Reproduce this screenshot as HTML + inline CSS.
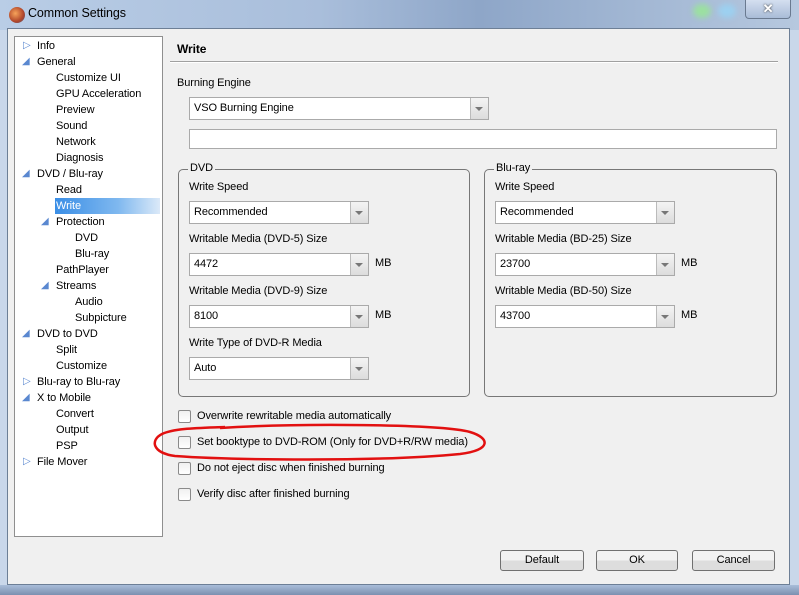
<!DOCTYPE html>
<html><head><style>
*{margin:0;padding:0;box-sizing:border-box}
body{width:799px;height:595px;overflow:hidden;background:#c9d7ea;font-family:"Liberation Sans",sans-serif;font-size:11px;letter-spacing:-0.1px;color:#000;position:relative}
.a{position:absolute}
#title{left:0;top:0;width:799px;height:30px;background:linear-gradient(90deg,#b9cde6 0%,#a9bedb 40%,#8ea6c8 60%,#b6c8df 100%)}
#client{left:7px;top:28px;width:783px;height:557px;background:#f0f0f0;border:1px solid #6d7f96}
#bottom{left:0;top:585px;width:799px;height:10px;background:linear-gradient(#a9bdd9,#7c90b0)}
#tree{left:14px;top:36px;width:149px;height:501px;background:#fff;border:1px solid #8f8f8f}
.t{position:absolute;height:16px;line-height:16px;font-size:11px;white-space:nowrap}
.tri{position:absolute;font-size:10px;color:#5a88d0}
.combo{position:absolute;height:23px;background:#fff;border:1px solid #aaa;font-size:11px;line-height:21px;padding-left:4px}
.combo::after{content:"";position:absolute;right:0;top:0;width:17px;height:21px;background:linear-gradient(#f4f4f4,#dcdcdc);border-left:1px solid #bbb}
.combo::before{content:"";position:absolute;right:5px;top:9px;border:4px solid transparent;border-top:4px solid #777;z-index:2}
.lbl{position:absolute;font-size:11px;white-space:nowrap}
.grp{position:absolute;border:1px solid #777;border-radius:5px}
.cb{position:absolute;width:13px;height:13px;border:1px solid #8a8a8a;border-radius:2px;background:linear-gradient(#f0f0f0,#fff)}
.btn{position:absolute;height:21px;border:1px solid #707070;border-radius:3px;background:linear-gradient(#f2f2f2 50%,#dddddd 50%);text-align:center;line-height:19px;font-size:11px}
</style></head><body>
<div class="a" id="title"></div>
<div class="a" style="left:9px;top:7px;width:16px;height:16px;border-radius:50%;background:radial-gradient(circle at 40% 40%,#f7a35a,#b0452a 60%,#3c5a8a)"></div>
<div class="a" style="left:28px;top:6px;font-size:12.5px">Common Settings</div>
<div class="a" style="left:693px;top:4px;width:18px;height:14px;border-radius:50%;background:#9be0a0;filter:blur(3px)"></div>
<div class="a" style="left:718px;top:4px;width:18px;height:14px;border-radius:50%;background:#9cd0f0;filter:blur(3px)"></div>
<div class="a" style="left:745px;top:0;width:46px;height:19px;border:1px solid #6a7a90;border-top:none;border-radius:0 0 4px 4px;background:linear-gradient(#d4dff0,#a9bcd7);text-align:center;color:#fff;font-weight:bold;font-size:13px;line-height:17px;text-shadow:0 0 2px #333">✕</div>
<div class="a" id="client"></div>
<div class="a" id="bottom"></div>
<div class="a" id="tree"></div>
<div class="a" style="left:55px;top:198px;width:105px;height:16px;background:linear-gradient(90deg,#3a8ee6,#7fb8ef 60%,#dbe9f8)"></div>
<div class="tri" style="left:23px;top:40px">▷</div><div class="t" style="left:37px;top:38px">Info</div>
<div class="tri" style="left:22px;top:56px">◢</div><div class="t" style="left:37px;top:54px">General</div>
<div class="t" style="left:56px;top:70px">Customize UI</div>
<div class="t" style="left:56px;top:86px">GPU Acceleration</div>
<div class="t" style="left:56px;top:102px">Preview</div>
<div class="t" style="left:56px;top:118px">Sound</div>
<div class="t" style="left:56px;top:134px">Network</div>
<div class="t" style="left:56px;top:150px">Diagnosis</div>
<div class="tri" style="left:22px;top:168px">◢</div><div class="t" style="left:37px;top:166px">DVD / Blu-ray</div>
<div class="t" style="left:56px;top:182px">Read</div>
<div class="t" style="left:56px;top:198px;color:#fff">Write</div>
<div class="tri" style="left:41px;top:216px">◢</div><div class="t" style="left:56px;top:214px">Protection</div>
<div class="t" style="left:75px;top:230px">DVD</div>
<div class="t" style="left:75px;top:246px">Blu-ray</div>
<div class="t" style="left:56px;top:262px">PathPlayer</div>
<div class="tri" style="left:41px;top:280px">◢</div><div class="t" style="left:56px;top:278px">Streams</div>
<div class="t" style="left:75px;top:294px">Audio</div>
<div class="t" style="left:75px;top:310px">Subpicture</div>
<div class="tri" style="left:22px;top:328px">◢</div><div class="t" style="left:37px;top:326px">DVD to DVD</div>
<div class="t" style="left:56px;top:342px">Split</div>
<div class="t" style="left:56px;top:358px">Customize</div>
<div class="tri" style="left:23px;top:376px">▷</div><div class="t" style="left:37px;top:374px">Blu-ray to Blu-ray</div>
<div class="tri" style="left:22px;top:392px">◢</div><div class="t" style="left:37px;top:390px">X to Mobile</div>
<div class="t" style="left:56px;top:406px">Convert</div>
<div class="t" style="left:56px;top:422px">Output</div>
<div class="t" style="left:56px;top:438px">PSP</div>
<div class="tri" style="left:23px;top:456px">▷</div><div class="t" style="left:37px;top:454px">File Mover</div>

<div class="lbl" style="left:177px;top:42px;font-weight:bold;font-size:12px">Write</div>
<div class="a" style="left:170px;top:61px;width:608px;height:2px;background:#a0a0a0;border-bottom:1px solid #fff"></div>
<div class="lbl" style="left:177px;top:77px">Burning Engine</div>
<div class="combo" style="left:189px;top:97px;width:300px">VSO Burning Engine</div>
<div class="a" style="left:189px;top:129px;width:588px;height:20px;background:#fff;border:1px solid #aaa"></div>

<div class="grp" style="left:178px;top:169px;width:292px;height:228px"></div>
<div class="lbl" style="left:188px;top:162px;background:#f0f0f0;padding:0 2px">DVD</div>
<div class="lbl" style="left:189px;top:181px">Write Speed</div>
<div class="combo" style="left:189px;top:201px;width:180px">Recommended</div>
<div class="lbl" style="left:189px;top:233px">Writable Media (DVD-5) Size</div>
<div class="combo" style="left:189px;top:253px;width:180px">4472</div><div class="lbl" style="left:375px;top:257px">MB</div>
<div class="lbl" style="left:189px;top:285px">Writable Media (DVD-9) Size</div>
<div class="combo" style="left:189px;top:305px;width:180px">8100</div><div class="lbl" style="left:375px;top:309px">MB</div>
<div class="lbl" style="left:189px;top:337px">Write Type of DVD-R Media</div>
<div class="combo" style="left:189px;top:357px;width:180px">Auto</div>

<div class="grp" style="left:484px;top:169px;width:293px;height:228px"></div>
<div class="lbl" style="left:494px;top:162px;background:#f0f0f0;padding:0 2px">Blu-ray</div>
<div class="lbl" style="left:495px;top:181px">Write Speed</div>
<div class="combo" style="left:495px;top:201px;width:180px">Recommended</div>
<div class="lbl" style="left:495px;top:233px">Writable Media (BD-25) Size</div>
<div class="combo" style="left:495px;top:253px;width:180px">23700</div><div class="lbl" style="left:681px;top:257px">MB</div>
<div class="lbl" style="left:495px;top:285px">Writable Media (BD-50) Size</div>
<div class="combo" style="left:495px;top:305px;width:180px">43700</div><div class="lbl" style="left:681px;top:309px">MB</div>

<div class="cb" style="left:178px;top:410px"></div><div class="lbl" style="left:197px;top:410px">Overwrite rewritable media automatically</div>
<div class="cb" style="left:178px;top:436px"></div><div class="lbl" style="left:197px;top:436px">Set booktype to DVD-ROM (Only for DVD+R/RW media)</div>
<div class="cb" style="left:178px;top:462px"></div><div class="lbl" style="left:197px;top:462px">Do not eject disc when finished burning</div>
<div class="cb" style="left:178px;top:488px"></div><div class="lbl" style="left:197px;top:488px">Verify disc after finished burning</div>
<svg class="a" style="left:150px;top:420px" width="345" height="45"><path d="M70 8 C150 3 290 4 320 12 C340 18 342 30 310 34 C230 42 80 40 25 36 C2 33 0 20 12 14 C25 8 50 8 75 7" fill="none" stroke="#e21010" stroke-width="2.5"/></svg>

<div class="btn" style="left:500px;top:550px;width:84px">Default</div>
<div class="btn" style="left:596px;top:550px;width:82px">OK</div>
<div class="btn" style="left:692px;top:550px;width:83px">Cancel</div>
</body></html>
